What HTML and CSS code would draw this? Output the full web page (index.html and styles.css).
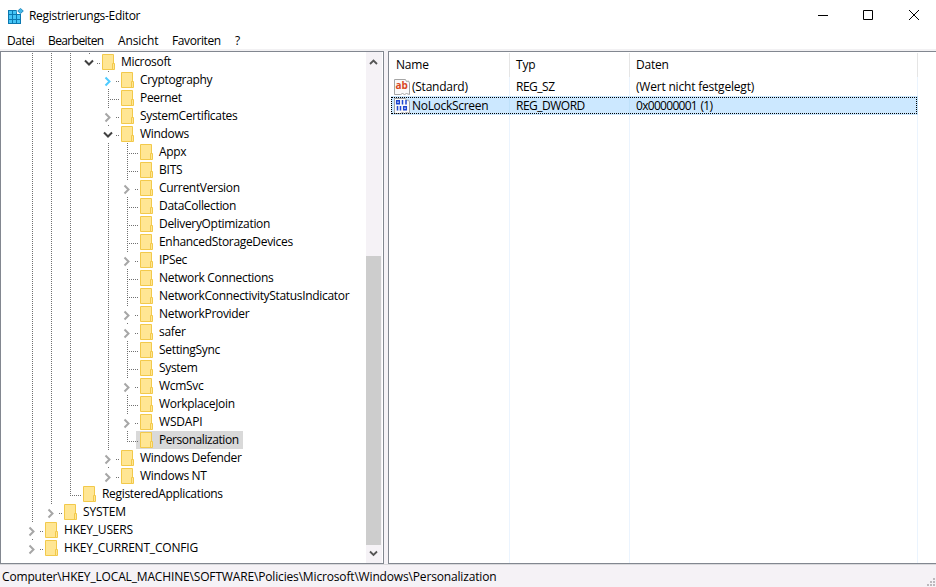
FILE: index.html
```html
<!DOCTYPE html>
<html lang="de">
<head>
    <meta charset="UTF-8">
    <title>Registrierungs-Editor</title>
    <link rel="stylesheet" href="styles.css">
</head>
<body>
    <div class="titlebar">
        <svg class="app-icon" width="16" height="16" viewBox="0 0 16 16">
            <path fill="#0b78b0" d="M0 2h11v3h2v11H0z"/>
            <path fill="#45c4f5" d="M1 3h3v3H1zM5 3h3v3H5zM1 7h3v4H1zM5 7h3v4H5zM9 7h3v4H9zM1 12h3v3H1zM5 12h3v3H5zM9 12h3v3H9z"/>
            <path fill="#fff" d="M8.500 0h7.500v6H9z"/>
            <path fill="#45b9ea" stroke="#0b78b0" stroke-width=".8" d="M12.500.4L15.300 3l-2.800 2.600L9.700 3z"/>
        </svg>
        <span class="title">Registrierungs-Editor</span>
        <svg class="controls" width="102" height="12" viewBox="0 0 102 12" fill="none" stroke="#000">
            <path d="M0 5.500h10M45.500.5h9v9h-9z"/>
            <path d="M91 0l10 10M101 0L91 10"/>
        </svg>
    </div>

    <div class="menubar">
        <span class="m-datei">Datei</span>
        <span class="m-bearbeiten">Bearbeiten</span>
        <span class="m-ansicht">Ansicht</span>
        <span class="m-favoriten">Favoriten</span>
        <span>?</span>
    </div>

    <div class="main">
        <div class="panel tree-panel">
            <div class="tree" id="tree"></div>
            <div class="scrollbar">
                <svg width="15" height="17" viewBox="0 0 15 17"><path d="M4 10l3.500-3.500L11 10" fill="none" stroke="#555" stroke-width="1.800"/></svg>
                <div class="thumb"></div>
                <svg width="15" height="17" viewBox="0 0 15 17"><path d="M4 6.500L7.500 10 11 6.500" fill="none" stroke="#555" stroke-width="1.800"/></svg>
            </div>
        </div>

        <div class="panel list-panel">
            <div class="list-row list-head">
                <div class="cell name">Name</div>
                <div class="cell type">Typ</div>
                <div class="cell data">Daten</div>
            </div>
            <div class="list-row">
                <div class="cell name">
                    <svg width="16" height="16" viewBox="0 0 16 16">
                        <path fill="#fafafa" stroke="#a5a5a5" d="M.5.5h11l1 2 2-.5 1 2v11.500l-3-1-2 1-2-1-2 1H.5z"/>
                        <text x="1.500" y="10" class="glyph-sz">ab</text>
                    </svg>
                    <span class="std">(Standard)</span>
                </div>
                <div class="cell type">REG_SZ</div>
                <div class="cell data">(Wert nicht festgelegt)</div>
            </div>
            <div class="list-row selected">
                <div class="cell name">
                    <svg width="16" height="16" viewBox="0 0 16 16">
                        <path fill="#fafafa" stroke="#a5a5a5" d="M.5.5h11l1 2 2-.5 1 2v11.500l-3-1-2 1-2-1-2 1H.5z"/>
                        <path fill="none" stroke="#1e46d2" stroke-width="1.500" d="M2.700 2.700h2.600v3.100H2.700zM8.500 2v4.500M12 2v4.500M3.500 8v4.500M6.500 8v4.500M9.700 8.700h2.600v3.100H9.700z"/>
                    </svg>
                    <span>NoLockScreen</span>
                </div>
                <div class="cell type">REG_DWORD</div>
                <div class="cell data number">0x00000001 (1)</div>
            </div>
            <div class="list-row list-rest">
                <div class="cell name"></div>
                <div class="cell type"></div>
                <div class="cell data"></div>
            </div>
        </div>
    </div>

    <div class="statusbar">
        <span>Computer\HKEY_LOCAL_MACHINE\SOFTWARE\Policies\Microsoft\Windows\Personalization</span>
        <svg class="grip" width="8" height="8" viewBox="0 0 8 8" fill="#bdb9bd">
            <path d="M6 0h2v2H6zM3 3h2v2H3zM6 3h2v2H6zM0 6h2v2H0zM3 6h2v2H3zM6 6h2v2H6z"/>
        </svg>
    </div>

    <script src="tree.js"></script>
</body>
</html>
```
FILE: styles.css
```css
* {
    box-sizing: border-box;
}
body {
    margin: 0;
    width: 936px;
    height: 587px;
    overflow: hidden;
    display: flex;
    flex-direction: column;
    background: #fff;
    color: #000;
    font-family: "Open Sans", "Noto Sans", sans-serif;
    font-size: 12px;
    letter-spacing: -0.2px;
    white-space: nowrap;
}
svg {
    display: block;
    flex: none;
}
.titlebar {
    height: 31px;
    padding: 0 16px 0 8px;
    display: flex;
    align-items: center;
}
.app-icon {
    margin-right: 5px;
}
.title {
    letter-spacing: -0.3px;
}
.controls {
    margin-left: auto;
}
.menubar {
    height: 20px;
    padding-left: 7px;
    line-height: 20px;
    display: flex;
    border-bottom: 2px solid #f2f1f3;
}
.m-datei {
    width: 41px;
    letter-spacing: -0.4px;
}
.m-bearbeiten {
    width: 70px;
    letter-spacing: -0.6px;
}
.m-ansicht {
    width: 54px;
    letter-spacing: -0.1px;
}
.m-favoriten {
    width: 63px;
    letter-spacing: -0.4px;
}
.main {
    height: 513px;
    display: flex;
    gap: 4px;
    background: #f5f2f6;
}
.panel {
    border: 1px solid #828790;
    background: #fff;
}
.tree-panel {
    width: 384px;
    padding-right: 1px;
    display: flex;
}
.tree {
    width: 365px;
    padding: 1px 0 0 22px;
    letter-spacing: -0.32px;
}
.node {
    height: 18px;
    display: flex;
}
.guide {
    width: 19px;
    height: 18px;
    padding-left: 9px;
    flex: none;
}
.line {
    width: 1px;
    height: 18px;
    background: repeating-linear-gradient(to bottom, #707070 0 1px, transparent 1px 2px);
}
.joint {
    width: 22px;
    flex: none;
}
.label {
    height: 18px;
    padding: 0 4px 0 5px;
    line-height: 18px;
}
.label.caps {
    letter-spacing: -0.2px;
}
.node.selected .label {
    background: #d9d9d9;
    letter-spacing: -0.43px;
}
.node.selected .joint {
    background: linear-gradient(to right, transparent 18px, #d9d9d9 18px);
}
.folder {
    height: 18px;
}
.node.selected .folder {
    background: #d9d9d9;
}
.scrollbar {
    width: 16px;
    padding: 2px 0 1px;
    display: flex;
    flex-direction: column;
    background: #f5f2f6;
}
.thumb {
    width: 15px;
    height: 289px;
    margin-top: auto;
    background: #cdcdcd;
}
.list-panel {
    width: 548px;
    padding-top: 1px;
    border-right: 0;
    display: flex;
    flex-direction: column;
}
.list-row {
    width: 529px;
    height: 19px;
    display: flex;
}
.cell {
    border-right: 1px solid #ebf4fe;
    padding-left: 6px;
    display: flex;
    align-items: center;
}
.cell.name {
    width: 121px;
    padding-left: 5px;
    letter-spacing: -0.3px;
}
.cell.name .std {
    letter-spacing: -0.25px;
}
.cell.name svg {
    margin-right: 2px;
}
.cell.type {
    width: 120px;
    letter-spacing: -0.5px;
}
.cell.data {
    width: 288px;
}
.cell.number {
    letter-spacing: -0.7px;
    word-spacing: 1px;
}
.list-head {
    height: 24px;
}
.list-head .cell {
    padding-bottom: 2px;
    border-color: #e5e5e5;
    letter-spacing: -0.2px;
}
.list-head .name {
    padding-left: 7px;
}
.list-row.selected {
    position: relative;
    width: 527px;
    margin-left: 2px;
    background: #cce8ff;
}
/* focus rectangle */
.list-row.selected::after {
    content: "";
    position: absolute;
    inset: 1px 1px 1px 0;
    border: 1px dotted #000;
}
.list-row.selected .cell {
    border-color: #bfe1fa;
}
.selected .cell.name {
    width: 119px;
    padding-left: 3px;
}
.list-rest {
    flex: 1;
}
.glyph-sz {
    font: bold 10px "Open Sans", sans-serif;
    letter-spacing: 0;
    fill: #d9481f;
}
.statusbar {
    height: 23px;
    padding-left: 2px;
    display: flex;
    align-items: center;
    background: #f5f2f6;
    border-top: 1px solid #d9d9dc;
    letter-spacing: -0.16px;
}
.grip {
    margin: 11px 1px 0 auto;
}
```
FILE: tree.js
```js
// guides: one character per level, "|" = running line, " " = empty
// state: "leaf", "last", "closed", "hot", "open"
const nodes = [
    ["|||", "open", "Microsoft"],
    ["||| ", "hot", "Cryptography"],
    ["||| ", "leaf", "Peernet"],
    ["||| ", "closed", "SystemCertificates"],
    ["||| ", "open", "Windows"],
    ["||| |", "leaf", "Appx"],
    ["||| |", "leaf", "BITS"],
    ["||| |", "closed", "CurrentVersion"],
    ["||| |", "leaf", "DataCollection"],
    ["||| |", "leaf", "DeliveryOptimization"],
    ["||| |", "leaf", "EnhancedStorageDevices"],
    ["||| |", "closed", "IPSec"],
    ["||| |", "leaf", "Network Connections"],
    ["||| |", "leaf", "NetworkConnectivityStatusIndicator"],
    ["||| |", "closed", "NetworkProvider"],
    ["||| |", "closed", "safer"],
    ["||| |", "leaf", "SettingSync"],
    ["||| |", "leaf", "System"],
    ["||| |", "closed", "WcmSvc"],
    ["||| |", "leaf", "WorkplaceJoin"],
    ["||| |", "closed", "WSDAPI"],
    ["||| |", "last", "Personalization", true],
    ["||| ", "closed", "Windows Defender"],
    ["||| ", "closed", "Windows NT"],
    ["||", "last", "RegisteredApplications"],
    ["|", "closed", "SYSTEM"],
    ["", "closed", "HKEY_USERS"],
    ["", "closed", "HKEY_CURRENT_CONFIG"]
];

const folder = `<svg class="folder" width="14" height="18" viewBox="0 -1 14 18">
    <path fill="#ffe694" stroke="#f2c94b" d="M.5.5h11v15H.5z"/>
    <path fill="#ffe694" stroke="#f2c94b" d="M10.500 9.500h2v6h-2z"/></svg>`;

function joint(state) {
    let d = "";
    if (state === "leaf") {
        d = `<path stroke="#707070" stroke-dasharray="1 1" d="M9.500 0v18M9 10.500h12"/>`;
    } else if (state === "last") {
        d = `<path stroke="#707070" stroke-dasharray="1 1" d="M9.500 0v11M9 10.500h12"/>`;
    } else {
        d = `<path stroke="#707070" stroke-dasharray="1 1" d="M9.500 0v1M17 10.500h4"/>`;
        if (state === "open") {
            d += `<path stroke="#404040" stroke-width="2" d="M5 7.500l4 4 4-4"/>`;
        } else {
            const color = state === "hot" ? "#4ecbff" : "#a6a6a6";
            d += `<path stroke="${color}" stroke-width="2" d="M6.500 6.500l4 4-4 4"/>`;
        }
    }
    return `<svg class="joint" width="22" height="18" viewBox="0 0 22 18" fill="none">${d}</svg>`;
}

document.getElementById("tree").innerHTML = nodes.map(([guides, state, name, selected]) => {
    const cells = [...guides].map(c =>
        `<div class="guide">${c === "|" ? '<div class="line"></div>' : ""}</div>`).join("");
    const caps = name === name.toUpperCase() ? " caps" : "";
    return `<div class="node${selected ? " selected" : ""}">${cells}${joint(state)}${folder}<div class="label${caps}">${name}</div></div>`;
}).join("");
```
